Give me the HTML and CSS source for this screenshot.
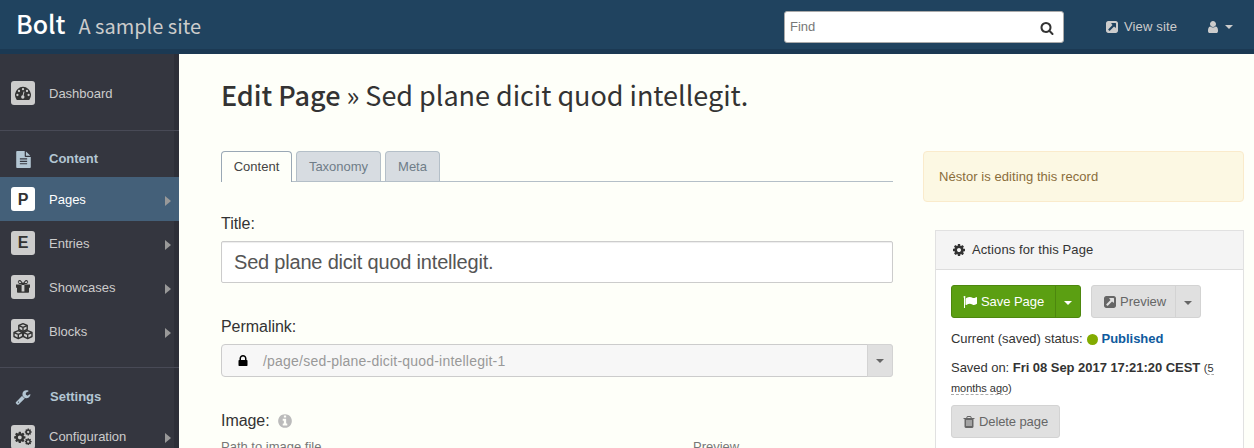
FILE: index.html
```html
<!DOCTYPE html>
<html lang="en">
<head>
<meta charset="utf-8">
<title>Bolt - Edit Page</title>
<link rel="stylesheet" href="styles.css">
</head>
<body>
<svg class="sprite" aria-hidden="true">
  <symbol id="search" viewBox="0 0 1792 1792"><path d="M1216 832q0-185-131.500-316.500t-316.500-131.500-316.500 131.500-131.500 316.500 131.500 316.500 316.500 131.500 316.500-131.500 131.500-316.500zm512 832q0 52-38 90t-90 38q-54 0-90-38l-343-342q-179 124-399 124-143 0-273.500-55.500t-225-150-150-225-55.500-273.500 55.500-273.500 150-225 225-150 273.500-55.500 273.500 55.500 225 150 150 225 55.500 273.500q0 220-124 399l343 343q37 37 37 90z"/></symbol>
  <symbol id="external" viewBox="0 0 1792 1792"><path d="M1408 928v-480q0-26-19-45t-45-19h-480q-42 0-59 39-17 41 14 70l144 144-534 534q-19 19-19 45t19 45l102 102q19 19 45 19t45-19l534-534 144 144q18 19 45 19 12 0 25-5 39-17 39-59zm256-512v960q0 119-84.500 203.500t-203.500 84.500h-960q-119 0-203.500-84.500t-84.500-203.500v-960q0-119 84.500-203.500t203.500-84.500h960q119 0 203.500 84.500t84.500 203.500z"/></symbol>
  <symbol id="user" viewBox="0 0 1792 1792"><path d="M1536 1399q0 109-62.500 187t-150.500 78h-854q-88 0-150.500-78t-62.500-187q0-85 8.500-160.500t31.500-152 58.500-131 94-89 134.500-34.500q131 128 313 128t313-128q76 0 134.500 34.500t94 89 58.500 131 31.500 152 8.500 160.500zm-256-887q0 159-112.500 271.500t-271.500 112.500-271.500-112.500-112.500-271.500 112.500-271.500 271.500-112.500 271.500 112.500 112.500 271.500z"/></symbol>
  <symbol id="file" viewBox="0 0 1792 1792"><path d="M1596 476q14 14 28 36h-472v-472q22 14 36 28zm-476 164h544v1056q0 40-28 68t-68 28h-1344q-40 0-68-28t-28-68v-1600q0-40 28-68t68-28h800v544q0 40 28 68t68 28zm160 736v-64q0-14-9-23t-23-9h-704q-14 0-23 9t-9 23v64q0 14 9 23t23 9h704q14 0 23-9t9-23zm0-256v-64q0-14-9-23t-23-9h-704q-14 0-23 9t-9 23v64q0 14 9 23t23 9h704q14 0 23-9t9-23zm0-256v-64q0-14-9-23t-23-9h-704q-14 0-23 9t-9 23v64q0 14 9 23t23 9h704q14 0 23-9t9-23z"/></symbol>
  <symbol id="wrench" viewBox="0 0 1792 1792"><path d="M448 1472q0-26-19-45t-45-19-45 19-19 45 19 45 45 19 45-19 19-45zm644-420l-682 682q-37 37-90 37-52 0-91-37l-106-108q-38-36-38-90 0-53 38-91l681-681q39 98 114.500 173.500t173.500 114.500zm634-435q0 39-23 106-47 134-164.500 217.500t-258.500 83.500q-185 0-316.500-131.500t-131.500-316.500 131.500-316.500 316.500-131.500q58 0 121.500 16.500t107.500 46.500q16 11 16 28t-16 28l-293 169v224l193 107q5-3 79-48.500t135.500-81 70.500-35.500q15 0 23.500 10t8.500 25z"/></symbol>
  <symbol id="cog" viewBox="0 0 1792 1792"><path d="M1152 896q0-106-75-181t-181-75-181 75-75 181 75 181 181 75 181-75 75-181zm512-109v222q0 12-8 23t-20 13l-185 28q-19 54-39 91 35 50 107 138 10 12 10 25t-9 23q-27 37-99 108t-94 71q-12 0-26-9l-138-108q-44 23-91 38-16 136-29 186-7 28-36 28h-222q-14 0-24.500-8.500t-11.500-21.500l-28-184q-49-16-90-37l-141 107q-10 9-25 9-14 0-25-11-126-114-165-168-7-10-7-23 0-12 8-23 15-21 51-66.500t54-70.500q-27-50-41-99l-183-27q-13-2-21-12.500t-8-23.500v-222q0-12 8-23t19-13l186-28q14-46 39-92-40-57-107-138-10-12-10-24 0-10 9-23 26-36 98.500-107.500t94.500-71.500q13 0 26 10l138 107q44-23 91-38 16-136 29-186 7-28 36-28h222q14 0 24.500 8.500t11.500 21.500l28 184q49 16 90 37l142-107q9-9 24-9 13 0 25 10 129 119 165 170 7 8 7 22 0 12-8 23-15 21-51 66.500t-54 70.500q26 50 41 98l183 28q13 2 21 12.500t8 23.500z"/></symbol>
  <symbol id="lock" viewBox="0 0 1792 1792"><path d="M640 768h512v-192q0-106-75-181t-181-75-181 75-75 181v192zm832 96v576q0 40-28 68t-68 28h-960q-40 0-68-28t-28-68v-576q0-40 28-68t68-28h32v-192q0-184 132-316t316-132 316 132 132 316v192h32q40 0 68 28t28 68z"/></symbol>
  <symbol id="info" viewBox="0 0 1792 1792"><path d="M1152 1376v-160q0-14-9-23t-23-9h-96v-512q0-14-9-23t-23-9h-320q-14 0-23 9t-9 23v160q0 14 9 23t23 9h96v320h-96q-14 0-23 9t-9 23v160q0 14 9 23t23 9h448q14 0 23-9t9-23zm-128-896v-160q0-14-9-23t-23-9h-192q-14 0-23 9t-9 23v160q0 14 9 23t23 9h192q14 0 23-9t9-23zm640 416q0 209-103 385.500t-279.500 279.500-385.500 103-385.500-103-279.500-279.500-103-385.500 103-385.500 279.500-279.500 385.500-103 385.500 103 279.500 279.500 103 385.500z"/></symbol>
  <symbol id="trash" viewBox="0 0 1792 1792"><path d="M704 1376v-704q0-14-9-23t-23-9h-64q-14 0-23 9t-9 23v704q0 14 9 23t23 9h64q14 0 23-9t9-23zm256 0v-704q0-14-9-23t-23-9h-64q-14 0-23 9t-9 23v704q0 14 9 23t23 9h64q14 0 23-9t9-23zm256 0v-704q0-14-9-23t-23-9h-64q-14 0-23 9t-9 23v704q0 14 9 23t23 9h64q14 0 23-9t9-23zm-544-992h448l-48-117q-7-9-17-11h-317q-10 2-17 11zm928 32v64q0 14-9 23t-23 9h-96v948q0 83-47 143.500t-113 60.500h-832q-66 0-113-58.500t-47-141.500v-952h-96q-14 0-23-9t-9-23v-64q0-14 9-23t23-9h309l70-167q15-37 54-63t79-26h320q40 0 79 26t54 63l70 167h309q14 0 23 9t9 23z"/></symbol>
  <symbol id="flag" viewBox="0 0 1792 1792"><path d="M320 256q0 72-64 110v1266q0 13-9.500 22.500t-22.500 9.500h-64q-13 0-22.500-9.500t-9.500-22.500v-1266q-64-38-64-110 0-53 37.500-90.500t90.500-37.500 90.500 37.500 37.500 90.500zm1472 64v763q0 25-12.500 38.500t-39.500 27.500q-215 116-369 116-61 0-123.500-22t-108.500-48-115.500-48-142.500-22q-192 0-464 146-17 9-33 9-26 0-45-19t-19-45v-742q0-32 31-55 21-14 79-43 236-120 421-120 107 0 200 29t219 88q38 19 88 19 54 0 117.500-21t110-47 88-47 54.500-21q26 0 45 19t19 45z"/></symbol>
  <symbol id="gauge" viewBox="0 0 18 18"><path d="M2.500 15.500A8 8 0 1 1 15.500 15.500Q15.200 16 14.700 16H3.300Q2.800 16 2.500 15.500z"/><g class="cut"><circle cx="3.400" cy="11" r="1.150"/><circle cx="5" cy="7" r="1.150"/><circle cx="9" cy="5.200" r="1.150"/><circle cx="13" cy="7" r="1.150"/><circle cx="14.600" cy="11" r="1.150"/><circle cx="8.800" cy="13" r="1.700"/><path d="M8.300 12.500L9.600 7.500 10.500 7.800 9.300 12.800z"/></g></symbol>
  <symbol id="gift" viewBox="0 0 14 14"><path d="M0 4.500h5.600V3.900H3.500A1.900 1.900 0 1 1 5.300.9L7 3 8.700.9a1.900 1.900 0 1 1 1.800 3H8.400v.6H14v3.300h-1V12q0 .8-.8.800H1.800Q1 12.800 1 12V7.800H0zM3.500 1.200a.9.900 0 0 0 0 1.800h1.900L4.400 1.600Q4.100 1.200 3.500 1.200zm7 0q-.6 0-.9.400L8.600 3h1.900a.9.900 0 0 0 0-1.800zM5.600 5.100v6.300h2.800V5.100z" fill-rule="evenodd"/></symbol>
  <symbol id="cubes" viewBox="0 0 20 18"><g class="cube"><path d="M10 1.700L14.200 3.500V7.500L10 9.500 5.800 7.500V3.500z"/><path d="M5.800 3.600L10 5.400 14.200 3.600M10 5.400V9"/><path d="M5.300 8.700L9.600 10.500V14.500L5.300 16.600 1 14.500V10.500zM1 10.600L5.300 12.400 9.600 10.600M5.300 12.400V16"/><path d="M14.700 8.700L19 10.500V14.500L14.700 16.600 10.400 14.500V10.500zM10.400 10.600L14.700 12.400 19 10.600M14.700 12.400V16"/></g></symbol>
  <symbol id="cogs" viewBox="0 0 18 18"><use href="#cog" x="-.8" y="2.800" width="13.200" height="13.200"/><use href="#cog" x="10.200" y="0" width="8" height="8"/><use href="#cog" x="10.200" y="9.600" width="8" height="8"/></symbol>
</svg>

<header class="topbar">
  <a class="brand"><b>Bolt</b><span>A sample site</span></a>
  <div class="search"><span>Find</span><svg class="icon"><use href="#search"/></svg></div>
  <a class="view-site"><svg class="icon"><use href="#external"/></svg>View site</a>
  <a class="account"><svg class="icon"><use href="#user"/></svg><i class="caret"></i></a>
</header>

<div class="layout">
  <nav class="sidebar">
    <section class="group first">
      <a class="item"><span class="tile"><svg class="i-gauge"><use href="#gauge"/></svg></span>Dashboard</a>
    </section>
    <section class="group">
      <h3><svg class="i-file"><use href="#file"/></svg>Content</h3>
      <a class="item active"><span class="tile">P</span>Pages<i class="arrow"></i></a>
      <a class="item"><span class="tile">E</span>Entries<i class="arrow"></i></a>
      <a class="item"><span class="tile"><svg class="i-gift"><use href="#gift"/></svg></span>Showcases<i class="arrow"></i></a>
      <a class="item"><span class="tile"><svg class="i-cubes"><use href="#cubes"/></svg></span>Blocks<i class="arrow"></i></a>
    </section>
    <section class="group settings">
      <h3><svg class="i-wrench"><use href="#wrench"/></svg>Settings</h3>
      <a class="item config"><span class="tile"><svg class="i-cogs"><use href="#cogs"/></svg></span>Configuration<i class="arrow"></i></a>
    </section>
  </nav>

  <main class="page">
    <h1><b>Edit Page</b> » Sed plane dicit quod intellegit.</h1>
    <div class="columns">
      <form class="editor">
        <div class="tabs"><a class="tab current">Content</a><a class="tab taxonomy">Taxonomy</a><a class="tab meta">Meta</a></div>
        <label class="label-title">Title:</label>
        <div class="title-input">Sed plane dicit quod intellegit.</div>
        <label class="label-link">Permalink:</label>
        <div class="permalink"><svg class="icon"><use href="#lock"/></svg><span>/page/sed-plane-dicit-quod-intellegit-1</span><a class="toggle"><i class="caret"></i></a></div>
        <label class="label-image">Image:<svg class="icon"><use href="#info"/></svg></label>
        <div class="image-cols"><span>Path to image file</span><span>Preview</span></div>
      </form>
      <aside class="side">
        <div class="alert">Néstor is editing this record</div>
        <section class="panel">
          <h2><svg class="icon"><use href="#cog"/></svg>Actions for this Page</h2>
          <div class="panel-body">
            <div class="buttons">
              <div class="btn-group save"><a class="btn"><svg class="icon"><use href="#flag"/></svg>Save Page</a><a class="drop"><i class="caret"></i></a></div>
              <div class="btn-group preview"><a class="btn"><svg class="icon"><use href="#external"/></svg>Preview</a><a class="drop"><i class="caret"></i></a></div>
            </div>
            <p class="status">Current (saved) status: <i class="dot"></i><b>Published</b></p>
            <p class="saved">Saved on: <strong>Fri 08 Sep 2017 17:21:20 CEST</strong> <small>(<span>5<br>months ago</span>)</small></p>
            <a class="delete"><svg class="icon"><use href="#trash"/></svg>Delete page</a>
          </div>
        </section>
      </aside>
    </div>
  </main>
</div>
</body>
</html>
```
FILE: styles.css
```css
* { box-sizing: border-box; }
body {
  margin: 0;
  height: 448px;
  overflow: hidden;
  background: #fefff9;
  color: #333;
  font: 13px/20px "Liberation Sans", Arial, sans-serif;
}
h1, h2, h3, p { margin: 0; }
svg { display: block; flex: none; fill: currentColor; }
.sprite { position: absolute; width: 0; height: 0; }
.icon { width: 14px; height: 14px; }
.caret {
  display: block;
  border: 4px solid transparent;
  border-top-color: currentColor;
  border-bottom: 0;
}

/* Top bar */
.topbar {
  display: flex;
  align-items: flex-start;
  height: 54px;
  background: #20435f;
  border-bottom: 5px solid #1b3953;
  color: #ccc;
}
.brand {
  display: flex;
  align-items: baseline;
  gap: 13px;
  width: 768px;
  margin-right: 16px;
  padding-left: 16px;
  font-family: "Noto Sans CJK JP", sans-serif;
  font-size: 20px;
  line-height: 47px;
}
.brand b { color: #fff; font-size: 25px; font-weight: 500; }
.search {
  display: flex;
  align-items: center;
  justify-content: space-between;
  width: 280px;
  height: 32px;
  margin: 11px 42px 0 0;
  padding: 0 9px 0 5px;
  background: #fff;
  border: 1px solid #aaa;
  border-radius: 3px;
  color: #777;
}
.search .icon { margin-top: 2px; color: #333; }
.view-site, .account { display: flex; align-items: center; height: 54px; }
.view-site { gap: 5px; width: 101px; margin-left: -1px; letter-spacing: .15px; }
.view-site .icon, .account .icon { margin-bottom: 1px; }
.account { gap: 5px; }
.account .caret { border-width: 4px 4px 0; margin-bottom: 1px; }

/* Sidebar */
.layout { display: flex; height: 394px; }
.sidebar {
  flex: none;
  width: 179px;
  overflow: hidden;
  background: linear-gradient(to right, #34363f 174px, #2d2f38 174px);
  color: #ccc;
}
.group { padding: 8px 0 14px; border-bottom: 1px solid #484a56; }
.first { padding: 17px 0 15px; }
.settings { padding-top: 9px; }
.group h3 {
  display: flex;
  align-items: center;
  height: 38px;
  padding-top: 2px;
  color: #b3c6d3;
  font-size: 13px;
}
.item { display: flex; align-items: center; height: 44px; padding-top: 2px; }
.tile {
  display: flex;
  align-items: center;
  justify-content: center;
  width: 24px;
  height: 24px;
  margin: 0 14px 2px 11px;
  background: #ccc;
  border-radius: 3px;
  color: #333;
  font-size: 16px;
  font-weight: bold;
}
.active { background: #446079; color: #fff; }
.active .tile { background: #fff; padding-top: 1px; }
.config { padding-top: 0; }
.config .tile { margin-bottom: 0; }
.arrow {
  margin: 2px 8px 0 auto;
  border: 5px solid transparent;
  border-left: 6px solid #999;
  border-right: 0;
}
.cut { fill: #ccc; }
.cube { fill: none; stroke: #333; stroke-width: 1.4; stroke-linejoin: round; }
.i-gauge { width: 18px; height: 18px; }
.i-gift { width: 14px; height: 14px; }
.i-cubes { width: 20px; height: 18px; }
.i-cogs { width: 18px; height: 18px; }
.i-file { width: 17px; height: 17px; margin: 0 17px 0 15px; }
.i-wrench { width: 16px; height: 16px; margin: 0 19px 0 15px; }

/* Page */
.page { flex: 1; padding: 21px 10px 0 42px; }
.page h1 {
  height: 76px;
  font: 400 27px/40px "Noto Sans CJK JP", sans-serif;
  letter-spacing: -.03px;
  white-space: nowrap;
}
.page h1 b { font-weight: 500; }
.columns { display: flex; justify-content: space-between; }
.editor { width: 672px; }
.tabs { display: flex; gap: 4px; height: 31px; border-bottom: 1px solid #b4bfc8; }
.tab {
  width: 85px;
  height: 30px;
  border: 1px solid #b4bfc8;
  border-bottom: 0;
  border-radius: 4px 4px 0 0;
  background: #d7dce1;
  color: #6f7d88;
  line-height: 29px;
  text-align: center;
}
.current { width: 71px; height: 31px; background: #fefff9; border-color: #9aa8b5; color: #444; }
.meta { width: 55px; }
.editor label { display: flex; align-items: center; height: 20px; font-size: 16px; letter-spacing: -.05px; }
.label-title { margin: 32px 0 7px; }
.title-input {
  height: 42px;
  padding-left: 12px;
  border: 1px solid #ccc;
  border-radius: 2px;
  background: #fff;
  box-shadow: inset 0 1px 1px rgba(0, 0, 0, .075);
  color: #555;
  font-size: 20px;
  line-height: 40px;
  letter-spacing: -.2px;
}
.label-link { margin: 34px 0 7px; }
.permalink {
  display: flex;
  align-items: center;
  height: 33px;
  padding-left: 14px;
  border: 1px solid #ccc;
  border-radius: 4px;
  background: #f7f7f7;
  color: #999;
  font-size: 14px;
  letter-spacing: .21px;
}
.permalink .icon { margin-right: 13px; color: #000; }
.toggle {
  display: flex;
  align-items: center;
  justify-content: center;
  width: 26px;
  height: 33px;
  margin: -1px -1px -1px auto;
  border: 1px solid #d3d3d3;
  border-radius: 0 3px 3px 0;
  background: #e0e0e0;
  color: #666;
}
.label-image { margin-top: 34px; }
.label-image .icon { width: 16px; height: 16px; margin-left: 7px; color: #bbb; }
.image-cols { display: grid; grid-template-columns: 472px 1fr; height: 11px; margin-top: 6px; color: #777; }

/* Actions column */
.side { width: 321px; }
.alert {
  height: 51px;
  padding: 15px;
  border: 1px solid #faebcc;
  border-radius: 4px;
  background: #fcf8e3;
  color: #8a6d3b;
  letter-spacing: .06px;
}
.panel { height: 218px; margin: 28px 0 0 12px; border: 1px solid #e1e1e1; border-bottom: 0; background: #fff; }
.panel h2 {
  display: flex;
  align-items: center;
  gap: 6px;
  height: 39px;
  padding-left: 16px;
  border-bottom: 1px solid #ddd;
  background: #f4f4f4;
  font-size: 13px;
  font-weight: normal;
  letter-spacing: .1px;
}
.panel-body { padding: 15px; }
.buttons { display: flex; gap: 10px; }
.btn-group {
  display: flex;
  height: 33px;
  border: 1px solid #d3d3d3;
  border-radius: 3px;
  background: #e0e0e0;
  color: #666;
}
.btn { display: flex; align-items: center; gap: 3px; padding-left: 11px; width: 83px; }
.drop {
  display: flex;
  align-items: center;
  justify-content: center;
  width: 25px;
  padding-top: 2px;
  border-left: 1px solid #d3d3d3;
}
.save { background: #5b9f12; border-color: #4d870e; color: #fff; }
.save .btn { width: 103px; gap: 4px; letter-spacing: -.05px; }
.save .drop { border-color: #4d870e; }
.status { display: flex; align-items: center; gap: 4px; margin-top: 11px; letter-spacing: -.03px; }
.status b { color: #0e5a9e; }
.dot { width: 11px; height: 11px; border-radius: 50%; background: #82ab00; }
.saved { margin-top: 9px; line-height: 20px; letter-spacing: -.04px; white-space: nowrap; }
.saved small { font-size: 11px; }
.saved span { border-bottom: 1px dashed #aaa; }
.delete {
  display: flex;
  align-items: center;
  gap: 3px;
  width: 109px;
  height: 33px;
  margin-top: 7px;
  padding-left: 10px;
  border: 1px solid #d3d3d3;
  border-radius: 3px;
  background: #e0e0e0;
  color: #666;
  letter-spacing: -.1px;
}
```
